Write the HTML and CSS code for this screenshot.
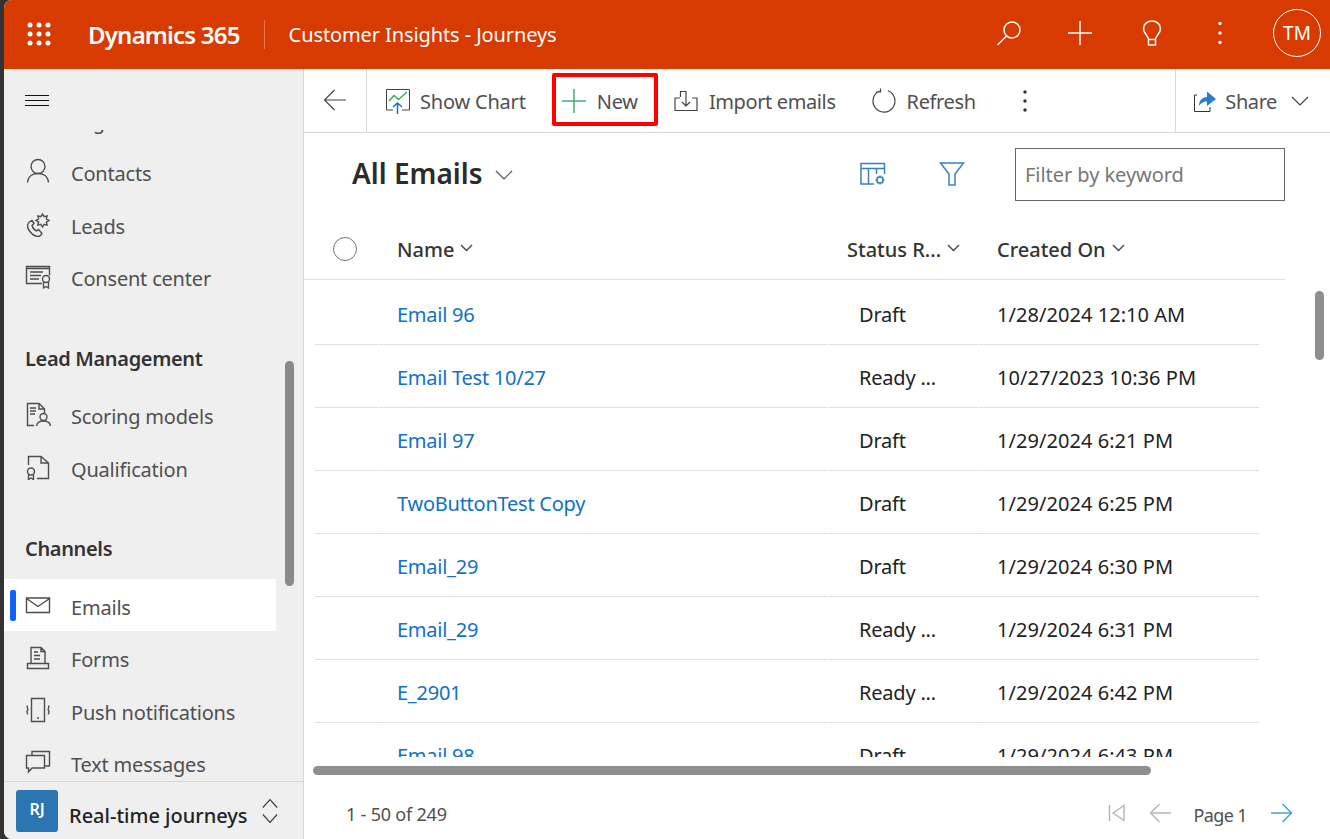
FILE: index.html
```html
<!DOCTYPE html>
<html lang="en">
<head>
<meta charset="utf-8">
<title>All Emails - Dynamics 365</title>
<link rel="stylesheet" href="styles.css">
</head>
<body>
<div class="app">
  <header class="topbar">
    <button class="waffle" aria-label="Apps">
      <svg class="dots" width="24" height="24" viewBox="0 0 24 24"><g fill="#fff"><circle cx="3" cy="3" r="2.5"/><circle cx="12" cy="3" r="2.5"/><circle cx="21" cy="3" r="2.5"/><circle cx="3" cy="12" r="2.5"/><circle cx="12" cy="12" r="2.5"/><circle cx="21" cy="12" r="2.5"/><circle cx="3" cy="21" r="2.5"/><circle cx="12" cy="21" r="2.5"/><circle cx="21" cy="21" r="2.5"/></g></svg>
    </button>
    <span class="brand">Dynamics 365</span>
    <span class="appname">Customer Insights - Journeys</span>
    <div class="top-actions">
      <span class="top-btn"><svg class="ico" width="26" height="26" viewBox="0 0 26 26"><circle cx="17" cy="10" r="8"/><path d="M11.500 16 L2.500 25"/></svg></span>
      <span class="top-btn"><svg class="ico" width="26" height="26" viewBox="0 0 26 26"><path d="M13 1V25M1 13H25"/></svg></span>
      <span class="top-btn"><svg class="ico" width="26" height="26" viewBox="0 0 26 26"><path d="M9.5 19.5 C9 15 4.5 13.5 4.5 8.5 C4.5 4 8.5 1 13 1 S21.5 4 21.5 8.5 C21.5 13.5 17 15 16.5 19.5 Z M9.5 19.5 V25 H16.5 V19.5"/></svg></span>
      <span class="top-btn top-kebab"><svg width="26" height="26" viewBox="0 0 26 26" fill="#fff"><circle cx="13" cy="3.5" r="1.7"/><circle cx="13" cy="13" r="1.7"/><circle cx="13" cy="22.5" r="1.7"/></svg></span>
      <span class="avatar">TM</span>
    </div>
  </header>

  <div class="body">
    <aside class="sidebar">
      <div class="burger-row">
        <svg width="24" height="11" viewBox="0 0 24 11"><path d="M0 .5H24M0 5.500H24M0 10.500H24" stroke="#111" stroke-width="1" fill="none"/></svg>
      </div>
      <nav class="nav">
        <div class="nav-list">
          <div class="nav-item"><span class="nav-ico"></span><span>Segments</span></div>
          <div class="nav-item"><svg class="nav-ico" viewBox="0 0 26 26"><circle cx="13" cy="8.5" r="7"/><path d="M2.5 24.5C3 18 8 15.5 13 15.5S23 18 23.5 24.5"/></svg><span>Contacts</span></div>
          <div class="nav-item"><svg class="nav-ico" viewBox="0 0 26 26"><path d="M5 10.5C2 12.5 1.500 16 4.500 20C8 24.500 12 26 15 25L17 22.500L13.500 18.500L11.500 20C9.500 19 7.500 17 7 14.500L9 12.500L7 9.500Z"/><polygon points="24,9.500 21.380,11.110 22.100,14.100 19.110,13.380 17.500,16 15.890,13.380 12.900,14.100 13.620,11.110 11,9.500 13.620,7.890 12.900,4.900 15.890,5.620 17.500,3 19.110,5.620 22.100,4.900 21.380,7.890"/></svg><span>Leads</span></div>
          <div class="nav-item"><svg class="nav-ico" viewBox="0 0 26 26"><path d="M17 20.500H1.500V3.500H24.500V12.500M1.500 5.500H24.500M5 9H18M5 12.500H16M5 16H14"/><circle cx="21" cy="16" r="3.500"/><path d="M18.500 19V25L21 23.500L23.500 25V19"/></svg><span>Consent center</span></div>

          <div class="nav-head">Lead Management</div>
          <div class="nav-item"><svg class="nav-ico" viewBox="0 0 26 26"><path d="M9 24.500H2.500V2.500H14L19.500 8V12M14 2.500V8H19.500M5 7H11M5 10H11M5 13H10"/><circle cx="18.500" cy="16" r="3.500"/><path d="M11.500 25C12 21.500 15 20 18.500 20S25 21.500 25.500 25"/></svg><span>Scoring models</span></div>
          <div class="nav-item"><svg class="nav-ico" viewBox="0 0 26 26"><path d="M3.500 11V2.500H16L23.500 9V24.500H12M16 2.500V9H23.500"/><circle cx="6" cy="17.500" r="3.500"/><path d="M3.500 20.500V25.500L6 24L8.500 25.500V20.500"/></svg><span>Qualification</span></div>

          <div class="nav-head">Channels</div>
          <div class="nav-item is-active"><svg class="nav-ico" viewBox="0 0 26 26"><path d="M1.500 6H24.500V20.500H1.500ZM1.500 6.500L13 14.500L24.500 6.500"/></svg><span>Emails</span></div>
          <div class="nav-item"><svg class="nav-ico" viewBox="0 0 26 26"><path d="M6 19V3.500H16L20 7.500V19M16 3.500V7.500H20M9 8H13M9 11.500H15M9 15H15M2.500 24.500V19.500H23.500V24.500Z"/></svg><span>Forms</span></div>
          <div class="nav-item"><svg class="nav-ico" viewBox="0 0 26 26"><path d="M6.500 1.500H19.500V24.500H6.500ZM12 21H14M2.500 8.500C1 10.500 4 11.500 2.500 13.500S3 16 2.500 17.500M23.500 8.500C25 10.500 22 11.500 23.500 13.500S23 16 23.500 17.500"/></svg><span>Push notifications</span></div>
          <div class="nav-item"><svg class="nav-ico" viewBox="0 0 26 26"><path d="M7 6.500V2.500H24.500V17H20M1.500 6.500H19.500V19H7L3.500 23V19H1.500Z"/></svg><span>Text messages</span></div>
        </div>
        <div class="nav-thumb"></div>
      </nav>
      <div class="area">
        <span class="area-badge">RJ</span>
        <span class="area-name">Real-time journeys</span>
        <svg class="area-switch" width="16" height="26" viewBox="0 0 18 26" preserveAspectRatio="none"><path d="M1 9.500L9 1.500L17 9.500M1 16.500L9 24.500L17 16.500"/></svg>
      </div>
    </aside>

    <main class="main">
      <div class="toolbar">
        <span class="back"><svg class="tool-ico" width="24" height="24" viewBox="0 0 24 24"><path d="M23 12H2M11.500 2L1.500 12L11.500 22"/></svg></span>
        <span class="cmd"><svg width="26" height="26" viewBox="0 0 26 26" fill="none"><path d="M8 22H1.500V1.500H24.500V22H17" stroke="#444"/><path d="M4 13L9 7.500L13.500 11.500L22 4" stroke="#3cab62" stroke-width="1.500"/><path d="M12.500 26V15M8 19L12.500 15L17 19" stroke="#1f6fc0" stroke-width="1.500"/></svg><span class="cmd-label">Show Chart</span></span>
        <span class="cmd cmd-new"><svg width="24" height="24" viewBox="0 0 24 24" fill="none"><path d="M12 0V24M0 12H24" stroke="#3fb270" stroke-width="1.500"/></svg><span class="cmd-label">New</span></span>
        <span class="cmd cmd-wide"><svg class="tool-ico" width="24" height="24" viewBox="0 0 24 24"><path d="M6 9H1V21.500H23V9H18M6.500 8V2.500H12V17M8 13L12 17L16 13"/></svg><span class="cmd-label">Import emails</span></span>
        <span class="cmd cmd-wide cmd-refresh"><svg class="tool-ico" width="26" height="26" viewBox="0 0 26 26"><path d="M17 2.800A11 11 0 1 1 8.500 3M9.500 .5V4H5"/></svg><span class="cmd-label">Refresh</span></span>
        <span class="more"><svg width="6" height="24" viewBox="0 0 6 24" fill="#333"><circle cx="3" cy="3" r="1.700"/><circle cx="3" cy="12" r="1.700"/><circle cx="3" cy="21" r="1.700"/></svg></span>
        <span class="share"><svg width="24" height="24" viewBox="0 0 24 24" fill="none"><path d="M4 6H1.500V22.500H17V18" stroke="#333"/><path d="M6 17C6 11 10 8 14 8V2.500L23 10L14 17V12.500C10 12.500 8 14 6 17Z" fill="#2b7cd3"/></svg><span class="cmd-label">Share</span><svg class="tool-ico share-chev" width="18" height="10" viewBox="0 0 18 10"><path d="M1 1L9 9L17 1"/></svg></span>
      </div>

      <div class="titlebar">
        <h1 class="view-title">All Emails</h1>
        <svg class="title-chev" width="18" height="10" viewBox="0 0 18 10"><path d="M1 1L9 9L17 1"/></svg>
        <svg class="blue-ico edit-cols" width="26" height="24" viewBox="0 0 26 24"><path d="M14 22H1V1.500H24.500V12M1 6.500H24.500M8.500 6.500V22M16.500 6.500V12"/><circle cx="20" cy="18" r="3"/><path d="M20 13.500V15M20 21V22.500M15.500 18H17M23 18H24.500M16.800 14.800L18 16M22 20L23.200 21.200M23.200 14.800L22 16M18 20L16.800 21.200"/></svg>
        <svg class="blue-ico filter" width="26" height="24" viewBox="0 0 26 24"><path d="M1.500 1H24.500L16 12V23H10V12Z"/></svg>
        <input class="keyword" type="text" placeholder="Filter by keyword">
      </div>

      <div class="thead">
        <span class="th-check"><span class="radio"></span></span>
        <span class="th th-name">Name<svg class="sort" width="13" height="8" viewBox="0 0 13 8"><path d="M1 1L6.500 6.500L12 1"/></svg></span>
        <span class="th th-status">Status R...<svg class="sort" width="13" height="8" viewBox="0 0 13 8"><path d="M1 1L6.500 6.500L12 1"/></svg></span>
        <span class="th th-created">Created On<svg class="sort" width="13" height="8" viewBox="0 0 13 8"><path d="M1 1L6.500 6.500L12 1"/></svg></span>
      </div>

      <div class="tbody">
        <div class="row"><span class="c c-check"></span><span class="c c-name"><a href="#">Email 96</a></span><span class="c c-status">Draft</span><span class="c c-date">1/28/2024 12:10 AM</span></div>
        <div class="row"><span class="c c-check"></span><span class="c c-name"><a href="#">Email Test 10/27</a></span><span class="c c-status">Ready ...</span><span class="c c-date">10/27/2023 10:36 PM</span></div>
        <div class="row"><span class="c c-check"></span><span class="c c-name"><a href="#">Email 97</a></span><span class="c c-status">Draft</span><span class="c c-date">1/29/2024 6:21 PM</span></div>
        <div class="row"><span class="c c-check"></span><span class="c c-name"><a href="#">TwoButtonTest Copy</a></span><span class="c c-status">Draft</span><span class="c c-date">1/29/2024 6:25 PM</span></div>
        <div class="row"><span class="c c-check"></span><span class="c c-name"><a href="#">Email_29</a></span><span class="c c-status">Draft</span><span class="c c-date">1/29/2024 6:30 PM</span></div>
        <div class="row"><span class="c c-check"></span><span class="c c-name"><a href="#">Email_29</a></span><span class="c c-status">Ready ...</span><span class="c c-date">1/29/2024 6:31 PM</span></div>
        <div class="row"><span class="c c-check"></span><span class="c c-name"><a href="#">E_2901</a></span><span class="c c-status">Ready ...</span><span class="c c-date">1/29/2024 6:42 PM</span></div>
        <div class="row"><span class="c c-check"></span><span class="c c-name"><a href="#">Email 98</a></span><span class="c c-status">Draft</span><span class="c c-date">1/29/2024 6:43 PM</span></div>
      </div>

      <div class="hscroll"></div>

      <div class="pager">
        <span class="count">1 - 50 of 249</span>
        <span class="pages">
          <svg class="pg-ico" width="17" height="18" viewBox="0 0 17 18"><path d="M1.500 1V17M16 1.500L5 9L16 16.500Z"/></svg>
          <svg class="pg-ico pg-prev" width="22" height="20" viewBox="0 0 22 20"><path d="M22 10H2M10.500 1L1.500 10L10.500 19"/></svg>
          <span class="page-no">Page 1</span>
          <svg class="pg-next" width="22" height="20" viewBox="0 0 22 20"><path d="M0 10H20M11.500 1L20.500 10L11.500 19"/></svg>
        </span>
      </div>

      <div class="vthumb"></div>
    </main>
  </div>

  <div class="callout"></div>
</div>
</body>
</html>
```

FILE: styles.css
```css
* { box-sizing: border-box; }
html, body { height: 100%; }
body {
  margin: 0;
  background: #333;
  font-family: "Noto Sans", "Open Sans", "Liberation Sans", sans-serif;
  font-size: 20px;
  overflow: hidden;
}
.app {
  position: relative;
  margin-left: 4px;
  width: 1326px;
  height: 839px;
  display: flex;
  flex-direction: column;
  background: #fff;
  border-radius: 8px 0 0 8px;
  overflow: hidden;
}

/* top bar */
.topbar {
  height: 69px;
  flex: none;
  display: flex;
  align-items: center;
  background: #d83b01;
  color: #fff;
}
.waffle {
  width: 84px;
  height: 69px;
  padding: 0 0 2px 23px;
  border: 0;
  background: none;
  display: flex;
  align-items: center;
}
.brand {
  font-size: 24px;
  font-weight: 600;
  line-height: 30px;
  padding-right: 24px;
  letter-spacing: -.8px;
}
.appname {
  height: 29px;
  line-height: 29px;
  padding-left: 24px;
  border-left: 1px solid #e8764a;
  letter-spacing: -.1px;
}
.top-actions {
  margin-left: auto;
  display: flex;
  align-items: center;
  padding: 0 9px 3px 0;
}
.top-btn {
  width: 72px;
  height: 48px;
  display: flex;
  align-items: center;
  justify-content: center;
}
.top-kebab { width: 64px; }
.ico { fill: none; stroke: #fff; stroke-width: 1.5; }
.avatar {
  width: 48px;
  height: 48px;
  margin-left: 21px;
  border: 1px solid #fff;
  border-radius: 50%;
  display: flex;
  align-items: center;
  justify-content: center;
  font-size: 19px;
}

/* layout */
.body { flex: 1; min-height: 0; display: flex; }

/* sidebar */
.sidebar {
  width: 300px;
  flex: none;
  display: flex;
  flex-direction: column;
  background: #efefef;
  border-right: 1px solid #d6d6d6;
}
.burger-row {
  height: 61px;
  flex: none;
  padding: 26px 0 0 21px;
  line-height: 0;
}
.nav {
  position: relative;
  flex: 1;
  min-height: 0;
  overflow: hidden;
}
.nav-list {
  margin: -37.5px 27px 0 0;
  color: #505050;
  letter-spacing: -.2px;
}
.nav-item {
  position: relative;
  height: 52.5px;
  display: flex;
  align-items: center;
  padding-left: 21px;
}
.nav-item > span:last-child { padding-top: 5px; }
.nav-ico {
  width: 26px;
  height: 26px;
  flex: none;
  margin-right: 20px;
  fill: none;
  stroke: #4d4d4d;
  stroke-width: 1.4;
}
.nav-head {
  height: 85.5px;
  padding: 42px 0 0 21px;
  line-height: 28px;
  font-weight: 600;
  color: #333;
  letter-spacing: -.35px;
}
.is-active { background: #fff; }
.is-active::before {
  content: "";
  position: absolute;
  left: 6px;
  top: 11px;
  width: 6px;
  height: 31px;
  border-radius: 2px;
  background: #0f62fe;
}
.nav-thumb {
  position: absolute;
  left: 281px;
  top: 231px;
  width: 9px;
  height: 225px;
  border-radius: 5px;
  background: #8a8a8a;
}
.area {
  height: 58px;
  flex: none;
  display: flex;
  align-items: center;
  padding-left: 12px;
  border-top: 1px solid #d6d6d6;
}
.area-badge {
  width: 42px;
  height: 42px;
  flex: none;
  border-radius: 3px;
  background: #2b75b3;
  color: #fff;
  font-size: 16px;
  font-weight: 600;
  text-align: center;
  line-height: 38px;
}
.area-name {
  margin-left: 11px;
  font-weight: 500;
  color: #222;
  padding-top: 9px;
}
.area-switch { margin-left: 14px; fill: none; stroke: #333; stroke-width: 1.2; }

/* main */
.main {
  position: relative;
  flex: 1;
  min-width: 0;
  display: flex;
  flex-direction: column;
}
.toolbar {
  height: 64px;
  flex: none;
  display: flex;
  align-items: stretch;
  border-bottom: 1px solid #d9d9d9;
  color: #505050;
}
.tool-ico { fill: none; stroke: #444; stroke-width: 1.2; }
.back {
  width: 63px;
  flex: none;
  display: flex;
  align-items: center;
  justify-content: center;
  padding-bottom: 2px;
  border-right: 1px solid #d9d9d9;
}
.cmd {
  display: flex;
  align-items: center;
  gap: 9px;
  padding: 0 18px;
  letter-spacing: -.2px;
}
.cmd-new { gap: 11px; }
.cmd-wide { gap: 11px; letter-spacing: -.38px; }
.cmd-refresh { gap: 10px; padding: 0 17px; }
.cmd-label { padding-top: 2px; }
.more {
  width: 64px;
  display: flex;
  align-items: center;
  justify-content: center;
}
.share {
  margin-left: auto;
  display: flex;
  align-items: center;
  gap: 8px;
  padding: 0 21px 0 17px;
  border-left: 1px solid #d9d9d9;
  letter-spacing: -.4px;
}
.share-chev { margin-left: 6px; }

.titlebar {
  height: 87px;
  flex: none;
  display: flex;
  align-items: center;
  padding: 0 45px 5px 48px;
}
.view-title {
  margin: -2px 0 0;
  font-size: 28px;
  font-weight: 600;
  line-height: 36px;
  color: #2b2b2b;
}
.title-chev { margin: 1px 0 0 13px; fill: none; stroke: #555; stroke-width: 1.2; }
.blue-ico { fill: none; stroke: #3a7fc1; stroke-width: 1.5; }
.edit-cols { margin-left: auto; }
.filter { margin-left: 53px; }
.keyword {
  width: 270px;
  height: 53px;
  margin-left: 50px;
  padding: 0 9px;
  border: 1px solid #666;
  border-radius: 0;
  font: inherit;
  letter-spacing: -.05px;
  outline: 0;
}
.keyword::placeholder { color: #777; opacity: 1; }

/* table */
.thead {
  height: 60px;
  margin-right: 45px;
  flex: none;
  display: grid;
  grid-template-columns: 75px 450px 150px 306px;
  align-items: center;
  border-bottom: 1px solid #e0e0e0;
  color: #333;
  font-weight: 500;
}
.th-check { padding-left: 29px; display: flex; }
.radio {
  width: 24px;
  height: 24px;
  margin-top: -2px;
  border: 1px solid #757575;
  border-radius: 50%;
}
.th { padding: 0 0 0 18px; display: flex; align-items: center; white-space: nowrap; }
.sort { margin: -4px 0 0 6px; fill: none; stroke: #444; stroke-width: 1.4; }
.tbody {
  height: 477px;
  flex: none;
  margin: 0 71px 0 11px;
  padding-top: 2px;
  overflow: hidden;
  color: #222;
}
.row {
  height: 63px;
  display: grid;
  grid-template-columns: 64px 450px 150px 280px;
}
.c {
  display: flex;
  align-items: center;
  padding: 2px 0 0 18px;
  border-bottom: 1px solid #e0e0e0;
  margin-right: 1px;
  white-space: nowrap;
}
.c-status { padding-left: 30px; letter-spacing: -.2px; }
.c-date { margin-right: 0; letter-spacing: .05px; }
.c-name a { color: #1170c7; text-decoration: none; letter-spacing: -.25px; }

.hscroll {
  flex: none;
  width: 838px;
  height: 9px;
  margin: 9px 0 0 9px;
  border-radius: 5px;
  background: #8f8f8f;
}
.pager {
  flex: 1;
  display: flex;
  align-items: center;
  justify-content: space-between;
  padding: 11px 37px 0 43px;
  color: #505050;
  font-size: 18px;
}
.count { margin: 3px 0 0 -1px; letter-spacing: -.2px; }
.pages { display: flex; align-items: center; }
.pg-ico { fill: none; stroke: #b5b5b5; stroke-width: 1.4; }
.pg-prev { margin-left: 24px; }
.page-no { margin: 4px 24px 0 22px; letter-spacing: -.6px; }
.pg-next { fill: none; stroke: #4a9fe3; stroke-width: 1.5; }
.vthumb {
  position: absolute;
  right: 6px;
  top: 222px;
  width: 9px;
  height: 69px;
  border-radius: 5px;
  background: #8f8f8f;
}

/* annotation drawn over the command bar */
.callout {
  position: absolute;
  left: 548px;
  top: 73px;
  width: 106px;
  height: 53px;
  border: 4px solid #f00;
  border-radius: 2px;
}
```
